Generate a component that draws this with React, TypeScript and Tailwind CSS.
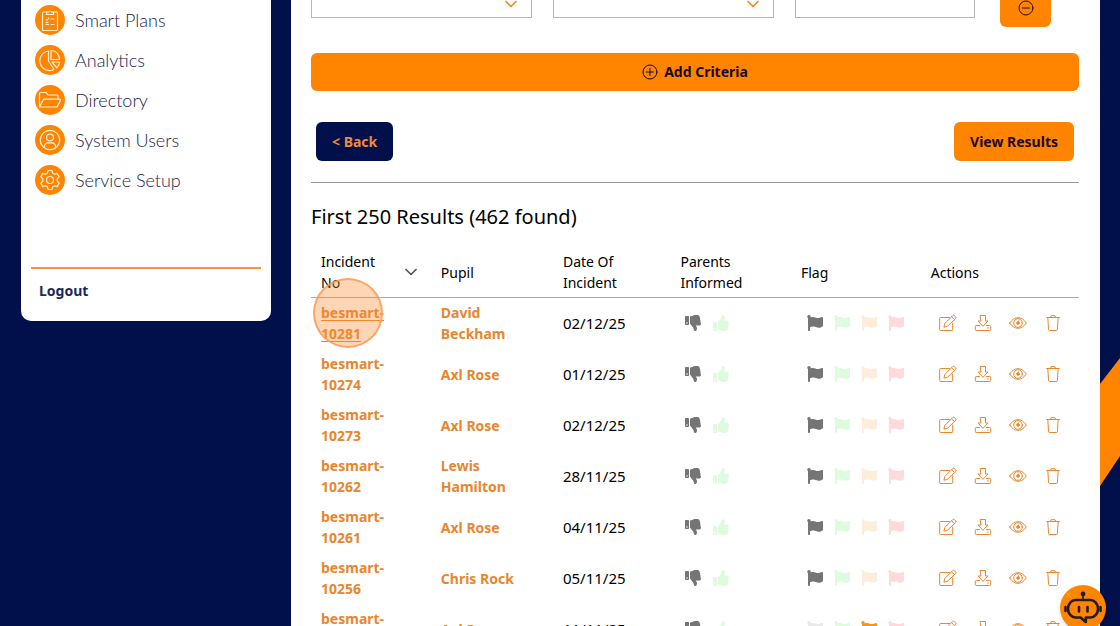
import type { ReactNode } from "react";
import { FaFlag, FaThumbsDown, FaThumbsUp } from "react-icons/fa";

const lineProps = {
  fill: "none",
  stroke: "currentColor",
  strokeLinecap: "round" as const,
  strokeLinejoin: "round" as const,
  "aria-hidden": true,
};

function ClipboardIcon() {
  return (
    <svg {...lineProps} viewBox="0 0 30 30" className="size-[30px]" strokeWidth="1.2">
      <path d="M12 7H8.500a1 1 0 0 0-1 1v16.500a1 1 0 0 0 1 1h13a1 1 0 0 0 1-1V8a1 1 0 0 0-1-1H18" />
      <path d="M11.500 9.500V7.200h1.800a1.800 1.800 0 0 1 3.400 0h1.800v2.300z" />
      <path d="m11 14.300 1 1 1.800-2.300M16 14h3M11 19.500h2.500M16 19.500h3M11 17.500h2" />
    </svg>
  );
}

function PieIcon() {
  return (
    <svg {...lineProps} viewBox="0 0 30 30" className="size-[30px]" strokeWidth="1.2">
      <path d="M13.500 6A9.800 9.800 0 1 0 19 24.500L13.500 16z" />
      <path d="M16 5.500v9h8.500c0-5-3.500-9-8.500-9z" />
      <path d="M17 17h7.500c0 2.500-1 4.300-2.700 5.800z" />
    </svg>
  );
}

function FolderIcon() {
  return (
    <svg {...lineProps} viewBox="0 0 30 30" className="size-[30px]" strokeWidth="1.2">
      <path d="M4.500 22V8.500a1 1 0 0 1 1-1h5.500l2 2.500h9a1 1 0 0 1 1 1v3" />
      <path d="M4.500 22 8.300 14.800a1.200 1.200 0 0 1 1-.7h15.200c.9 0 1.200.6.900 1.300l-3 6a1.200 1.200 0 0 1-1 .6H5.300z" />
    </svg>
  );
}

function UserIcon() {
  return (
    <svg {...lineProps} viewBox="0 0 30 30" className="size-[30px]" strokeWidth="1.2">
      <circle cx="15" cy="15" r="9.700" />
      <circle cx="15" cy="12.500" r="3.400" />
      <path d="M9.500 22.500c-.5-3 1.500-4.700 3.500-4.700h4c2 0 4 1.700 3.500 4.700" />
    </svg>
  );
}

function GearIcon() {
  return (
    <svg {...lineProps} viewBox="0 0 30 30" className="size-[30px]" strokeWidth="1.2">
      <path d="M13 5.500h4l.6 2.700 2 1.100 2.600-.9 2 3.500-2 1.900v2.400l2 1.900-2 3.500-2.600-.9-2 1.100-.6 2.700h-4l-.6-2.700-2-1.100-2.600.9-2-3.500 2-1.900v-2.400l-2-1.900 2-3.500 2.600.9 2-1.100z" />
      <circle cx="15" cy="15" r="3.500" />
    </svg>
  );
}

function ChevronIcon({ className }: { className: string }) {
  return (
    <svg {...lineProps} viewBox="0 0 12 8" className={className} strokeWidth="1.700">
      <path d="m1 1.500 5 5 5-5" />
    </svg>
  );
}

function CircleSign({ plus = false }: { plus?: boolean }) {
  return (
    <svg {...lineProps} viewBox="0 0 16 16" className="size-4" strokeWidth="1">
      <circle cx="8" cy="8" r="7" />
      <path d={plus ? "M4.500 8h7M8 4.500v7" : "M4.500 8h7"} />
    </svg>
  );
}

function EditIcon() {
  return (
    <svg {...lineProps} viewBox="0 0 18 18" className="size-[18px]" strokeWidth="1">
      <path d="M10.500 3.500H1.500a.8.8 0 0 0-.8.8v11.400c0 .5.300.8.800.8h11.400c.5 0 .8-.3.800-.8V9" />
      <path d="m5 12.800.8-3.300 8-8a1 1 0 0 1 1.400 0l1.600 1.500a1 1 0 0 1 0 1.400l-8.300 7.800zM12.600 2.800l2.900 2.800" />
    </svg>
  );
}

function DownloadIcon() {
  return (
    <svg {...lineProps} viewBox="0 0 18 18" className="size-[18px]" strokeWidth="1">
      <path d="M6.500 1.500h5v5.500H14L9 12.300 4 7h2.500z" />
      <path d="M5.500 11.500H2.300a1 1 0 0 0-1 1v3a1 1 0 0 0 1 1h13.400a1 1 0 0 0 1-1v-3a1 1 0 0 0-1-1h-3.200M13.500 14h.7" />
    </svg>
  );
}

function EyeIcon() {
  return (
    <svg {...lineProps} viewBox="0 0 18 18" className="size-[18px]" strokeWidth="1">
      <path d="M.7 9C3 5.500 6 3.700 9 3.700s6 1.800 8.300 5.300C15 12.500 12 14.300 9 14.300S3 12.500.7 9z" />
      <circle cx="9" cy="9" r="4.300" />
      <circle cx="9" cy="9" r="1.300" fill="currentColor" />
      <path d="M9.700 7.500V6.800" />
    </svg>
  );
}

function TrashIcon() {
  return (
    <svg {...lineProps} viewBox="0 0 18 18" className="size-[18px]" strokeWidth="1">
      <path d="M2.700 3.500h12.600M6.500 3.300l.5-1.600h4l.5 1.600M3.800 3.700l.8 12c0 .5.400.8.900.8h7c.5 0 .9-.3.900-.8l.8-12" />
    </svg>
  );
}

function RobotIcon() {
  return (
    <svg {...lineProps} viewBox="0 0 46 46" className="size-[46px]" strokeWidth="2.600">
      <circle cx="23" cy="9" r="2.400" fill="currentColor" stroke="none" />
      <path d="M23 10v5" strokeWidth="1.600" />
      <path d="M15.500 15h15c4 0 7.500 4 7.500 8.700s-3.500 8.800-7.500 8.800h-4.700V37l-5.300-4.500h-5c-4 0-7.500-4-7.500-8.800S11.500 15 15.500 15z" />
      <path d="M5.500 22v4M40.500 22v4M19 22v4.500M27.500 22v4.500" />
      <path d="m7 8 3 4m0-4-3 4" stroke="#ffb04d" strokeWidth=".8" />
    </svg>
  );
}

const navItems: { label: string; icon: ReactNode }[] = [
  { label: "Smart Plans", icon: <ClipboardIcon /> },
  { label: "Analytics", icon: <PieIcon /> },
  { label: "Directory", icon: <FolderIcon /> },
  { label: "System Users", icon: <UserIcon /> },
  { label: "Service Setup", icon: <GearIcon /> },
];

type Flag = "grey" | "green" | "amber" | "red";

const flagStyles: Record<Flag, { on: string; off: string }> = {
  grey: { on: "text-[#757575]", off: "text-[#e9e9e9]" },
  green: { on: "text-[#30c030]", off: "text-[#defbde]" },
  amber: { on: "text-[#f2971b]", off: "text-[#ffeddc]" },
  red: { on: "text-[#e03030]", off: "text-[#ffd9dc]" },
};
const flagNames: Flag[] = ["grey", "green", "amber", "red"];

const incidents: { no: string; pupil: string; date: string; flag: Flag }[] = [
  { no: "10281", pupil: "David Beckham", date: "02/12/25", flag: "grey" },
  { no: "10274", pupil: "Axl Rose", date: "01/12/25", flag: "grey" },
  { no: "10273", pupil: "Axl Rose", date: "02/12/25", flag: "grey" },
  { no: "10262", pupil: "Lewis Hamilton", date: "28/11/25", flag: "grey" },
  { no: "10261", pupil: "Axl Rose", date: "04/11/25", flag: "grey" },
  { no: "10256", pupil: "Chris Rock", date: "05/11/25", flag: "grey" },
  { no: "10255", pupil: "Axl Rose", date: "11/11/25", flag: "amber" },
];

function CriteriaSelect({ label }: { label: string }) {
  return (
    <div className="relative mt-0.5 flex-[221]">
      <select aria-label={label} className="block h-7 w-full appearance-none border border-[#b5b5b5] bg-white px-3" />
      <ChevronIcon className="pointer-events-none absolute top-2.5 right-[15px] h-2 w-3 text-[#f28a1e]" />
    </div>
  );
}

function IncidentRow({ no, pupil, date, flag, active }: (typeof incidents)[number] & { active: boolean }) {
  return (
    <tr className="h-[51px]">
      <td className="relative px-2.5">
        <a
          href="#incident"
          className={
            active
              ? "block text-sm leading-[21px] font-bold text-[#e8862e] underline underline-offset-2"
              : "block text-sm leading-[21px] font-bold text-[#e8862e]"
          }
        >
          besmart-
          <br />
          {no}
        </a>
        {active && (
          <span className="pointer-events-none absolute top-[-20px] left-0.5 size-[70px] rounded-full border-2 border-[#f79c56]/80 bg-[#ff8a2b]/35" />
        )}
      </td>
      <td className="px-2.5">
        <a href="#pupil" className="block max-w-20 text-sm leading-[21px] font-bold text-[#e8862e]">
          {pupil}
        </a>
      </td>
      <td className="px-2.5">{date}</td>
      <td className="px-2.5">
        <div className="flex items-center gap-3 pl-[5px]">
          <button type="button" aria-label="Parents not informed">
            <FaThumbsDown className="size-4 text-[#757575]" />
          </button>
          <button type="button" aria-label="Parents informed">
            <FaThumbsUp className="size-4 text-[#defbde]" />
          </button>
        </div>
      </td>
      <td className="px-2.5">
        <div className="flex items-center gap-[11px] pl-1.5">
          {flagNames.map((name) => (
            <button key={name} type="button" aria-label={`${name} flag`} className={name === flag ? flagStyles[name].on : flagStyles[name].off}>
              <FaFlag className="size-4" />
            </button>
          ))}
        </div>
      </td>
      <td className="px-2.5">
        <div className="flex items-center gap-[17px] pl-2 text-[#e8862e]">
          <button type="button" aria-label="Edit"><EditIcon /></button>
          <button type="button" aria-label="Download"><DownloadIcon /></button>
          <button type="button" aria-label="View"><EyeIcon /></button>
          <button type="button" aria-label="Delete"><TrashIcon /></button>
        </div>
      </td>
    </tr>
  );
}

export default function App() {
  return (
    <div className="relative flex h-screen items-start overflow-hidden bg-[#01104b] pr-5 font-['Noto_Sans',sans-serif] text-[15px] leading-[21px] text-black">
      <svg viewBox="0 0 20 128" className="absolute top-[358px] right-0 h-32 w-5 text-[#ff8400]" aria-hidden="true">
        <path d="M20 0v98L0 128V26z" fill="currentColor" />
      </svg>

      <aside className="w-[291px] shrink-0 pr-5 pl-[21px]">
        <div className="rounded-b-[10px] bg-white px-2.5 pb-5">
          <nav className="h-[267px]">
            {navItems.map(({ label, icon }) => (
              <a key={label} href="#nav" className="flex h-10 items-center gap-2.5 pl-1 font-['Lato',sans-serif] text-lg font-light text-[#1c1c4a]">
                <span className="rounded-full bg-[#ff8400] text-[#ffefd6]">{icon}</span>
                {label}
              </a>
            ))}
          </nav>
          <div className="border-t-2 border-[#f0953f] pt-[11px] pl-2">
            <a href="#logout" className="block text-sm leading-[21px] font-bold text-[#1a2859]">Logout</a>
          </div>
        </div>
      </aside>

      <main className="h-screen min-w-0 flex-1 overflow-hidden bg-white pr-[21px] pl-5">
        <form className="-mt-3 text-sm">
          <div className="flex items-start gap-[21px]">
            <CriteriaSelect label="Criteria field" />
            <CriteriaSelect label="Criteria condition" />
            <div className="mt-0.5 flex-[180]">
              <input aria-label="Criteria value" className="block h-7 w-full border border-[#b5b5b5] px-3" />
            </div>
            <button type="button" aria-label="Remove criteria" className="mr-7 ml-1 flex h-[39px] w-[51px] items-center justify-center rounded-md bg-[#ff8400] text-[#2a0a1a]">
              <CircleSign />
            </button>
          </div>
          <button type="button" className="mt-[26px] flex h-[38px] w-full items-center justify-center gap-1.5 rounded-md bg-[#ff8400] font-bold text-[#1c0820]">
            <CircleSign plus />
            Add Criteria
          </button>
          <div className="mt-[31px] flex justify-between px-[5px]">
            <button type="button" className="h-[39px] rounded-md bg-[#01104b] px-4 font-bold text-[#f08a35]">&lt; Back</button>
            <button type="submit" className="h-[39px] rounded-md bg-[#ff8400] px-4 font-bold text-[#1c0820]">View Results</button>
          </div>
        </form>

        <section className="mt-[21px] border-t border-[#999] pt-5">
          <h2 className="text-xl leading-7">First 250 Results (462 found)</h2>
          <table className="mt-5 w-full table-fixed text-left">
            <colgroup>
              <col className="w-[15.6%]" />
              <col className="w-[15.9%]" />
              <col className="w-[15.3%]" />
              <col className="w-[15.7%]" />
              <col className="w-[16.9%]" />
              <col />
            </colgroup>
            <thead className="text-sm leading-[21px]">
              <tr className="h-[46px] border-b border-[#aaa]">
                <th className="px-2.5 pb-1 font-normal">
                  <span className="flex items-center justify-between pr-1">
                    <span>Incident<br />No</span>
                    <button type="button" aria-label="Sort by incident number">
                      <ChevronIcon className="h-2 w-3 text-[#555]" />
                    </button>
                  </span>
                </th>
                <th className="px-2.5 pb-1 font-normal">Pupil</th>
                <th className="px-2.5 pb-1 font-normal">Date Of<br />Incident</th>
                <th className="px-2.5 pb-1 font-normal">Parents<br />Informed</th>
                <th className="px-2.5 pb-1 font-normal">Flag</th>
                <th className="px-2.5 pb-1 font-normal">Actions</th>
              </tr>
            </thead>
            <tbody>
              {incidents.map((incident, index) => (
                <IncidentRow key={incident.no} {...incident} active={index === 0} />
              ))}
            </tbody>
          </table>
        </section>
      </main>

      <button type="button" aria-label="Open assistant" className="absolute right-3.5 -bottom-[5px] rounded-full bg-[#ff8400] text-[#2a1a20] shadow-md">
        <RobotIcon />
      </button>
    </div>
  );
}
